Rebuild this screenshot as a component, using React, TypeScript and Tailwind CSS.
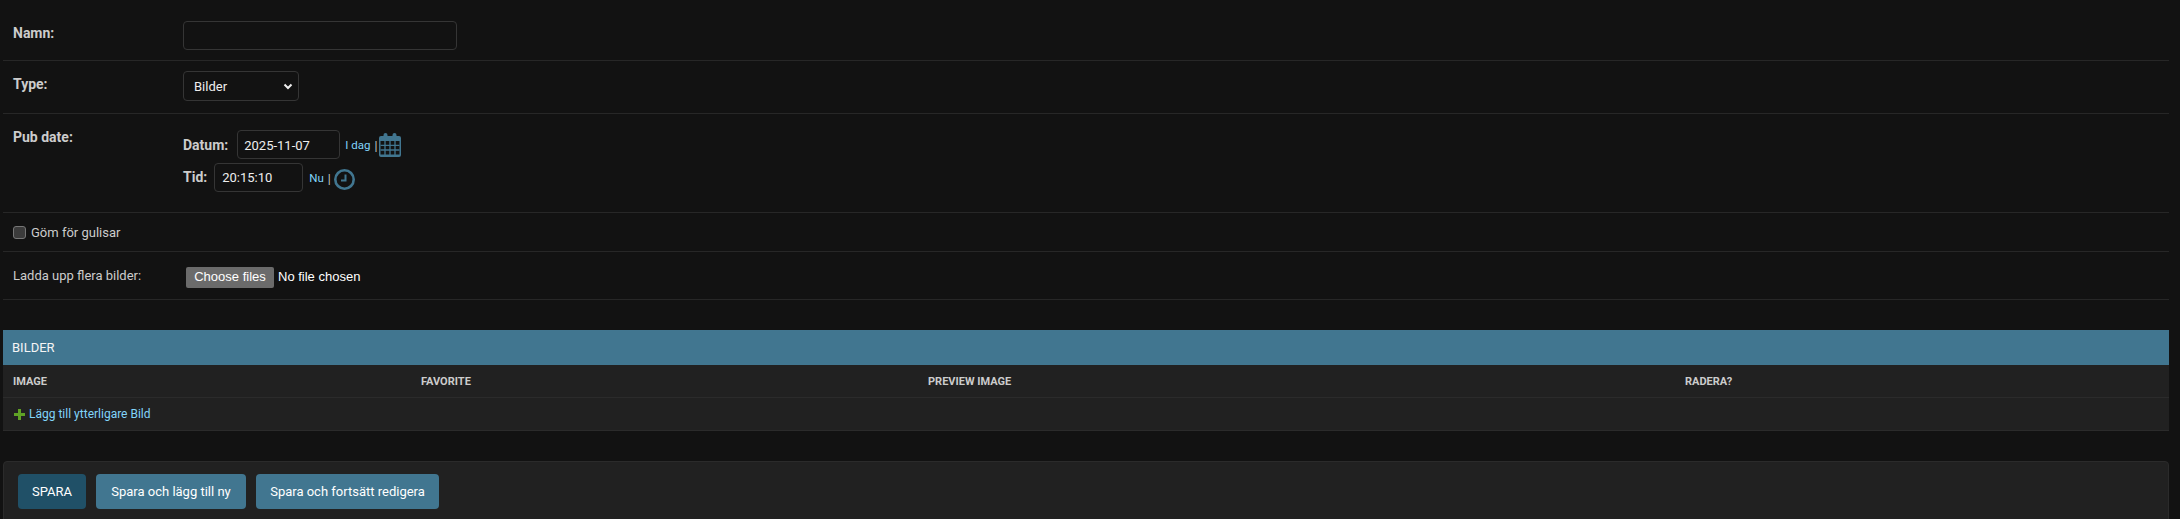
const font = { fontFamily: 'Roboto, "Noto Sans", sans-serif' };

const CalendarIcon = () => (
  <svg width="22" height="24" viewBox="0 0 22 24" className="shrink-0">
    <path
      d="M2 3h2.500V2a2 2 0 0 1 4 0v1h5V2a2 2 0 0 1 4 0v1H20a2 2 0 0 1 2 2v17a2 2 0 0 1-2 2H2a2 2 0 0 1-2-2V5a2 2 0 0 1 2-2z"
      fill="#417690"
    />
    <path d="M1.500 8h19v13.500h-19z" fill="#121212" />
    <path
      d="M1.500 12.300h19M1.500 17h19M6 8v14M11 8v14M16 8v14"
      stroke="#417690"
      strokeWidth="1.300"
    />
  </svg>
);

const ClockIcon = () => (
  <svg width="21" height="21" viewBox="0 0 21 21" className="shrink-0">
    <circle cx="10.500" cy="10.500" r="9.200" fill="none" stroke="#417690" strokeWidth="2.600" />
    <path d="M11.500 5.500v6H7" fill="none" stroke="#417690" strokeWidth="2" />
  </svg>
);

const PlusIcon = () => (
  <svg width="11" height="11" viewBox="0 0 11 11" className="shrink-0">
    <path d="M4 0h3v4h4v3H7v4H4V7H0V4h4z" fill="#5fa225" />
  </svg>
);

const Row = ({ className, children }: { className: string; children: React.ReactNode }) => (
  <div className={`border-b border-[#272727] ${className}`}>{children}</div>
);

const Label = ({ children }: { children: React.ReactNode }) => (
  <label className="w-[170px] shrink-0 text-[14px] font-bold leading-[18px] text-[#cccccc]">{children}</label>
);

const inputClass =
  "h-[29px] rounded-[4px] border border-[#353535] bg-[#121212] text-[13px] text-[#eeeeee] outline-none";

export default function App() {
  return (
    <div className="h-[519px] w-[2180px] overflow-hidden bg-[#121212] pl-[3px] pr-[11px]" style={font}>
      <Row className="flex h-[61px] pl-[10px] pt-[24px]">
        <Label>Namn:</Label>
        <input className={`${inputClass} -mt-[3px] w-[274px]`} />
      </Row>
      <Row className="flex h-[53px] pl-[10px] pt-[14px]">
        <Label>Type:</Label>
        <div className={`${inputClass} -mt-[4px] flex h-[30px] w-[116px] items-center justify-between pl-[10px] pr-[4px]`}>
          <span className="pt-[1px]">Bilder</span>
          <svg width="12" height="12" viewBox="0 0 12 12">
            <path d="M2.500 4.500 6 8l3.500-3.500" fill="none" stroke="#eeeeee" strokeWidth="2" />
          </svg>
        </div>
      </Row>
      <Row className="flex h-[99px] pl-[10px] pt-[14px]">
        <Label>Pub date:</Label>
        <div className="mt-[2px] flex flex-col gap-[4px]">
          <div className="flex h-[29px] items-center">
            <span className="pt-[1px] text-[14px] font-bold text-[#cccccc]">Datum:</span>
            <input className={`${inputClass} ml-[9px] w-[103px] px-[6px] pt-[1px]`} defaultValue="2025-11-07" />
            <span className="ml-[5px] pt-[2px] text-[11.500px] text-[#81d4fa]">I dag</span>
            <span className="ml-[4px] pt-[2px] text-[12px] text-[#cccccc]">|</span>
            <span className="ml-[2px] pt-[1px]"><CalendarIcon /></span>
          </div>
          <div className="flex h-[29px] items-center">
            <span className="text-[14px] font-bold text-[#cccccc]">Tid:</span>
            <input className={`${inputClass} ml-[7px] w-[89px] px-[7px]`} defaultValue="20:15:10" />
            <span className="ml-[6px] pt-[3px] text-[11.500px] text-[#81d4fa]">Nu</span>
            <span className="ml-[4px] pt-[3px] text-[12px] text-[#cccccc]">|</span>
            <span className="ml-[3px] pt-[3px]"><ClockIcon /></span>
          </div>
        </div>
      </Row>
      <Row className="flex h-[39px] items-center gap-[5px] pl-[10px]">
        <span className="h-[13px] w-[13px] rounded-[3px] border border-[#767676] bg-[#3b3b3b]" />
        <span className="pt-[2px] text-[13px] text-[#cccccc]">Göm för gulisar</span>
      </Row>
      <Row className="flex h-[48px] pl-[10px] pt-[15px]">
        <label className="w-[173px] shrink-0 text-[13px] leading-[18px] text-[#cccccc]">Ladda upp flera bilder:</label>
        <div className="flex h-[21px] items-center" style={{ fontFamily: '"Liberation Sans", sans-serif' }}>
          <span className="flex h-[21px] w-[88px] items-center justify-center rounded-[2px] bg-[#6b6b6b] pb-[1px] text-[13px] text-white">
            Choose files
          </span>
          <span className="ml-[4px] pb-[1px] text-[13px] text-white">No file chosen</span>
        </div>
      </Row>

      <div className="mt-[30px]">
        <div className="flex h-[35px] items-center bg-[#417690] pl-[9px] pt-[1px] text-[13px] text-[#f5f5f5]">BILDER</div>
        <div className="flex h-[33px] items-center border-b border-[#2b2b2b] bg-[#212121] pt-[2px] text-[11px] font-bold text-[#cccccc]">
          <span className="w-[415px] pl-[10px]">IMAGE</span>
          <span className="w-[507px] pl-[3px]">FAVORITE</span>
          <span className="w-[757px] pl-[3px]">PREVIEW IMAGE</span>
          <span className="pl-[3px]">RADERA?</span>
        </div>
        <div className="flex h-[33px] items-center gap-[4px] border-b border-[#2b2b2b] bg-[#212121] pl-[11px] text-[12px] text-[#81d4fa]">
          <PlusIcon />
          <span>Lägg till ytterligare Bild</span>
        </div>
      </div>

      <div className="mt-[30px] flex h-[70px] gap-[10px] rounded-[4px] border border-[#2b2b2b] bg-[#212121] pl-[14px] pt-[12px] text-[13px] text-white">
        <span className="flex h-[35px] w-[68px] items-center justify-center rounded-[4px] bg-[#205067]">SPARA</span>
        <span className="flex h-[35px] w-[150px] items-center justify-center rounded-[4px] bg-[#417690]">Spara och lägg till ny</span>
        <span className="flex h-[35px] w-[183px] items-center justify-center rounded-[4px] bg-[#417690]">Spara och fortsätt redigera</span>
      </div>
    </div>
  );
}
